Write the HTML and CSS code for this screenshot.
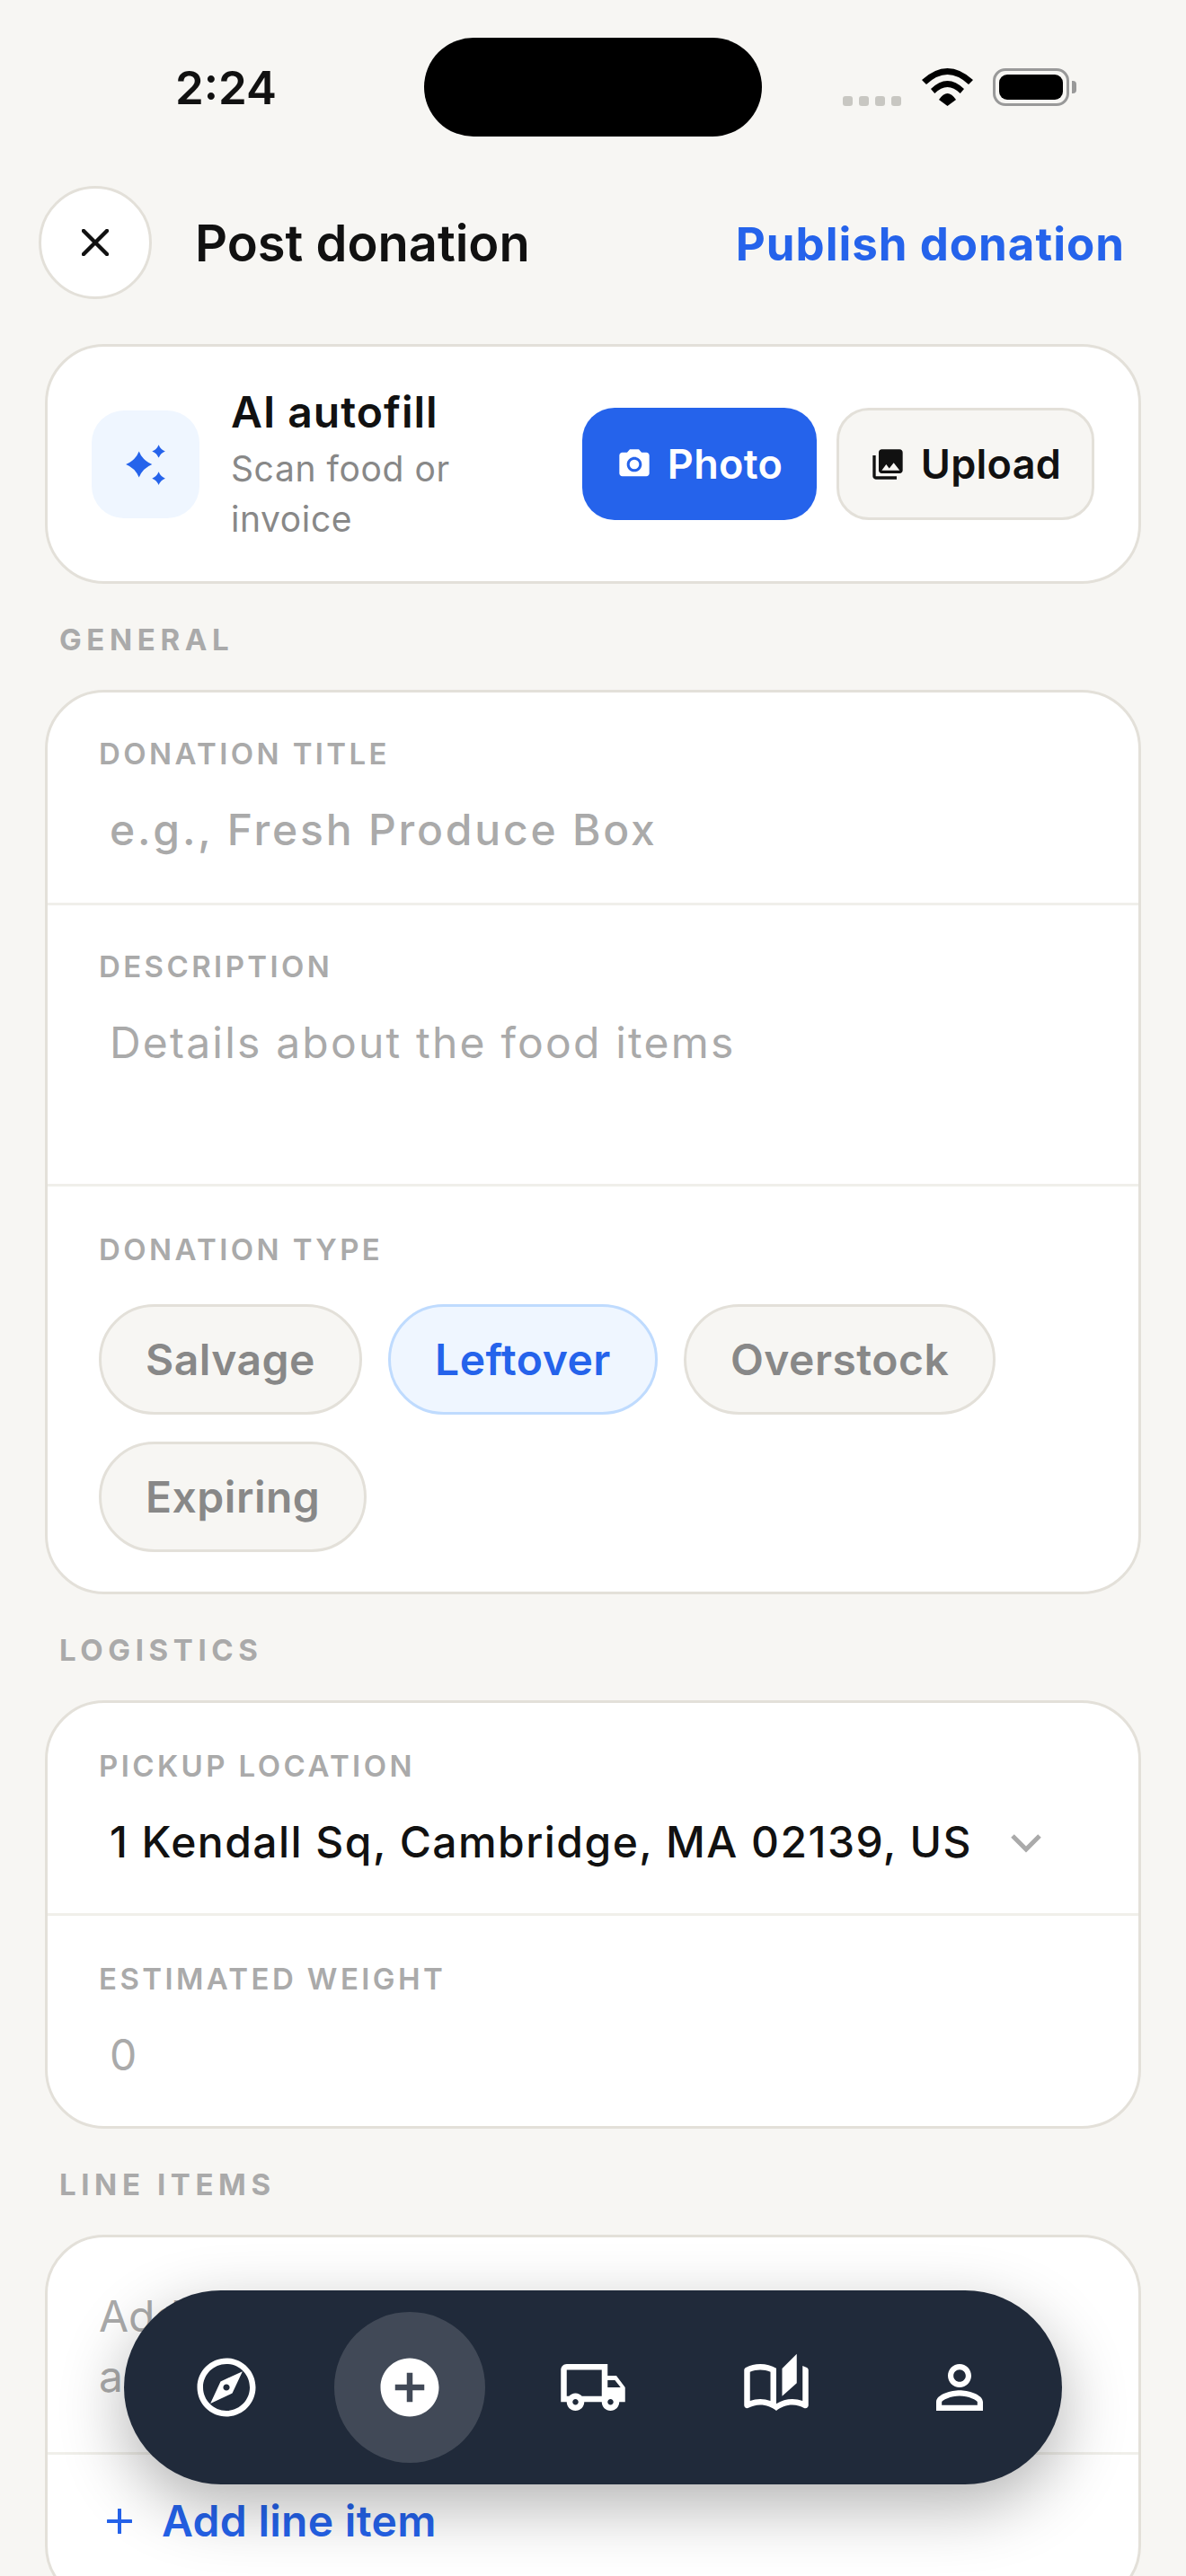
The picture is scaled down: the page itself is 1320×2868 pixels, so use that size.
FILE: index.html
```html
<!DOCTYPE html>
<html lang="en">
<head>
  <meta charset="UTF-8" />
  <title>Post donation</title>
  <link rel="stylesheet" href="styles.css">
</head>
<body>
  <div class="screen">

    <div class="status-bar">
      <span class="status-time">2:24</span>
      <div class="island"></div>
      <div class="status-icons">
        <div class="signal"><i></i><i></i><i></i><i></i></div>
        <svg class="wifi" viewBox="0 0 57 42" width="57" height="42">
          <path d="M0 13Q28.5-13 57 13L52 18Q28.5-4 5 18Z"/>
          <path d="M10 23Q28.5 5 47 23L42.7 28Q28.5 14 14.3 28Z"/>
          <path d="M19 35Q28.5 21 38 35L28.5 42Z"/>
        </svg>
        <div class="battery"><div class="battery-fill"></div></div>
        <div class="battery-nub"></div>
      </div>
    </div>

    <header class="top-bar">
      <button class="close-btn">
        <svg viewBox="0 0 30 30" width="30" height="30"><path d="M2 2L28 28M28 2L2 28" stroke="#111" stroke-width="4.5" stroke-linecap="round"/></svg>
      </button>
      <h1>Post donation</h1>
      <a class="publish">Publish donation</a>
    </header>

    <section class="card autofill">
      <div class="spark-tile">
        <svg viewBox="0 0 48 48" width="50" height="50" fill="#2563eb">
          <path d="M17 10Q21 20 31 24Q21 28 17 38Q13 28 3 24Q13 20 17 10Z"/>
          <path d="M38 3Q40 8 45 10Q40 12 38 17Q36 12 31 10Q36 8 38 3Z"/>
          <path d="M38 32Q40 37 45 39Q40 41 38 46Q36 41 31 39Q36 37 38 32Z"/>
        </svg>
      </div>
      <div class="autofill-text">
        <div class="autofill-title">AI autofill</div>
        <div class="autofill-sub">Scan food or invoice</div>
      </div>
      <button class="btn btn-blue">
        <svg viewBox="0 0 24 24" width="40" height="40" fill="#fff"><circle cx="12" cy="12" r="3.2"/><path d="M9 2L7.170 4H4c-1.100 0-2 .9-2 2v12c0 1.100.9 2 2 2h16c1.100 0 2-.9 2-2V6c0-1.100-.9-2-2-2h-3.170L15 2H9zm3 15c-2.760 0-5-2.240-5-5s2.240-5 5-5 5 2.240 5 5-2.240 5-5 5z"/></svg>
        Photo
      </button>
      <button class="btn btn-plain">
        <svg viewBox="0 0 24 24" width="40" height="40" fill="#111"><path d="M22 16V4c0-1.100-.9-2-2-2H8c-1.100 0-2 .9-2 2v12c0 1.100.9 2 2 2h12c1.100 0 2-.9 2-2zm-11-4l2.030 2.710L16 11l4 5H8l3-4zM2 6v14c0 1.100.9 2 2 2h14v-2H4V6H2z"/></svg>
        Upload
      </button>
    </section>

    <div class="section-label">GENERAL</div>
    <section class="card">
      <div class="row">
        <div class="field-label">DONATION TITLE</div>
        <div class="field-value placeholder bold">e.g., Fresh Produce Box</div>
      </div>
      <div class="row">
        <div class="field-label">DESCRIPTION</div>
        <div class="field-value placeholder multi">Details about the food items</div>
      </div>
      <div class="row chips-row">
        <div class="field-label">DONATION TYPE</div>
        <div class="chips">
          <span class="chip">Salvage</span>
          <span class="chip active">Leftover</span>
          <span class="chip">Overstock</span>
          <span class="chip">Expiring</span>
        </div>
      </div>
    </section>

    <div class="section-label">LOGISTICS</div>
    <section class="card logistics">
      <div class="row">
        <div class="field-label">PICKUP LOCATION</div>
        <div class="select-line">
          <div class="field-value">1 Kendall Sq, Cambridge, MA 02139, US</div>
          <svg viewBox="0 0 36 22" width="36" height="22"><path d="M3 3L18 18L33 3" fill="none" stroke="#aaa" stroke-width="5"/></svg>
        </div>
      </div>
      <div class="row">
        <div class="field-label">ESTIMATED WEIGHT</div>
        <div class="field-value placeholder">0</div>
      </div>
    </section>

    <div class="section-label">LINE ITEMS</div>
    <section class="card">
      <div class="row items-hint">Add each food item<br>and its quantity</div>
      <div class="add-line">
        <svg viewBox="0 0 28 28" width="28" height="28"><path d="M14 1V27M1 14H27" stroke="#2563eb" stroke-width="4" stroke-linecap="round"/></svg>
        <span>Add line item</span>
      </div>
    </section>

    <nav class="tab-bar">
      <a class="tab">
        <svg viewBox="0 0 24 24" width="78" height="78" fill="#fff"><path d="M12 2C6.480 2 2 6.480 2 12s4.480 10 10 10 10-4.480 10-10S17.520 2 12 2zm0 18c-4.410 0-8-3.590-8-8s3.590-8 8-8 8 3.590 8 8-3.590 8-8 8zm-5.500-2.500l7.510-3.490L17.500 6.500 9.990 9.990 6.500 17.500zm5.500-6.600c.61 0 1.100.49 1.100 1.100s-.49 1.100-1.100 1.100-1.100-.49-1.100-1.100.49-1.100 1.100-1.100z"/></svg>
      </a>
      <a class="tab current">
        <svg viewBox="0 0 24 24" width="78" height="78" fill="#fff"><path d="M12 2C6.480 2 2 6.480 2 12s4.480 10 10 10 10-4.480 10-10S17.520 2 12 2zm5 11h-4v4h-2v-4H7v-2h4V7h2v4h4v2z"/></svg>
      </a>
      <a class="tab">
        <svg viewBox="0 0 24 24" width="78" height="78" fill="#fff"><path d="M20 8h-3V4H3c-1.100 0-2 .9-2 2v11h2c0 1.660 1.340 3 3 3s3-1.340 3-3h6c0 1.660 1.340 3 3 3s3-1.340 3-3h2v-5l-3-4zm-.5 1.500l1.960 2.500H17V9.500h2.500zM6 18c-.55 0-1-.45-1-1s.45-1 1-1 1 .45 1 1-.45 1-1 1zm2.220-3c-.55-.61-1.330-1-2.220-1s-1.670.39-2.220 1H3V6h12v9H8.220zM18 18c-.55 0-1-.45-1-1s.45-1 1-1 1 .45 1 1-.45 1-1 1z"/></svg>
      </a>
      <a class="tab">
        <svg viewBox="0 0 24 24" width="78" height="78" fill="#fff"><path d="M22.470 5.200C22 4.960 21.510 4.760 21 4.590v12.030C19.860 16.210 18.690 16 17.500 16c-1.900 0-3.780.54-5.500 1.580V5.480C10.380 4.550 8.510 4 6.500 4c-1.790 0-3.480.44-4.970 1.200C1.200 5.360 1 5.710 1 6.080v12.080c0 .58.47.99 1 .99.16 0 .32-.04.48-.12C3.690 18.400 5.050 18 6.500 18c2.070 0 3.980.82 5.500 2 1.520-1.180 3.430-2 5.500-2 1.450 0 2.810.4 4.020 1.040.16.08.32.12.48.12.52 0 1-.41 1-.99V6.080c0-.37-.2-.72-.53-.88zM10 16.620C8.860 16.210 7.690 16 6.500 16c-1.190 0-2.360.21-3.500.62V6.710C4.110 6.240 5.280 6 6.500 6c1.200 0 2.390.25 3.500.72v9.900zM19 .5l-5 5V15l5-4.500V.5z"/></svg>
      </a>
      <a class="tab">
        <svg viewBox="0 0 24 24" width="78" height="78" fill="#fff"><path d="M12 5.900c1.160 0 2.100.94 2.100 2.100s-.94 2.100-2.100 2.100S9.900 9.160 9.900 8s.94-2.100 2.100-2.100m0 9c2.970 0 6.100 1.460 6.100 2.100v1.100H5.900V17c0-.64 3.130-2.100 6.100-2.100M12 4C9.790 4 8 5.790 8 8s1.790 4 4 4 4-1.790 4-4-1.790-4-4-4zm0 9c-2.670 0-8 1.340-8 4v3h16v-3c0-2.660-5.330-4-8-4z"/></svg>
      </a>
    </nav>

  </div>
</body>
</html>
```

FILE: styles.css
```css
* {
  box-sizing: border-box;
}

body {
  margin: 0;
  background: #f7f6f3;
  font-family: "Inter", "Liberation Sans", sans-serif;
  color: #111;
}

.screen {
  position: relative;
  width: 1320px;
  height: 2868px;
  overflow: hidden;
}

/* status bar */
.status-bar {
  height: 194px;
  display: flex;
  align-items: center;
  justify-content: space-between;
  padding: 0 122px 0 195px;
}

.status-time {
  font-size: 51px;
  font-weight: 600;
}

.island {
  position: absolute;
  left: 472px;
  top: 42px;
  width: 376px;
  height: 110px;
  border-radius: 55px;
  background: #000;
}

.status-icons {
  display: flex;
  align-items: flex-end;
  height: 42px;
}

.signal {
  display: flex;
  gap: 7px;
  margin-right: 23px;
}

.signal i {
  width: 11px;
  height: 11px;
  border-radius: 3px;
  background: #c8c7c2;
}

.wifi {
  margin-right: 22px;
}

.battery {
  width: 85px;
  height: 42px;
  padding: 4px;
  border: 3px solid #999;
  border-radius: 14px;
}

.battery-fill {
  height: 100%;
  background: #000;
  border-radius: 9px;
}

.battery-nub {
  width: 5px;
  height: 14px;
  margin: 0 0 14px 3px;
  background: #999;
  border-radius: 0 4px 4px 0;
}

/* header */
.top-bar {
  display: flex;
  align-items: center;
  margin-top: 13px;
  padding: 0 68px 0 43px;
}

.close-btn {
  width: 126px;
  height: 126px;
  border: 3px solid #e3e0d9;
  border-radius: 50%;
  background: #fff;
  display: flex;
  align-items: center;
  justify-content: center;
  padding: 0;
}

.top-bar h1 {
  margin: 2px 0 0 48px;
  font-size: 56px;
  font-weight: 600;
  flex: 1;
}

.publish {
  margin-top: 2px;
  font-size: 51px;
  font-weight: 700;
  letter-spacing: 1px;
  color: #2563eb;
}

/* cards */
.card {
  margin: 0 50px;
  background: #fff;
  border: 3px solid #e3e0d9;
  border-radius: 66px;
  overflow: hidden;
}

.autofill {
  margin-top: 50px;
  height: 267px;
  display: flex;
  align-items: center;
  padding: 0 49px;
}

.spark-tile {
  width: 120px;
  height: 120px;
  border-radius: 36px;
  background: #eff6ff;
  display: flex;
  align-items: center;
  justify-content: center;
  flex-shrink: 0;
}

.autofill-text {
  flex: 1;
  margin-left: 35px;
}

.autofill-title {
  font-size: 48px;
  font-weight: 600;
  letter-spacing: 1px;
  margin-top: 2px;
  margin-bottom: 6px;
}

.autofill-sub {
  width: 260px;
  font-size: 39px;
  line-height: 56px;
  letter-spacing: 0.6px;
  color: #888;
}

.btn {
  height: 125px;
  border-radius: 36px;
  display: flex;
  align-items: center;
  justify-content: center;
  gap: 17px;
  font-family: inherit;
  font-size: 45px;
  font-weight: 600;
  letter-spacing: 0.3px;
  padding: 0;
  flex-shrink: 0;
}

.btn-blue {
  width: 261px;
  background: #2563eb;
  border: 0;
  color: #fff;
  margin-right: 22px;
}

.btn-plain {
  width: 287px;
  background: #f7f6f3;
  border: 3px solid #e3e0d9;
  color: #111;
}

.section-label {
  margin: 42px 0 36px 66px;
  font-size: 33px;
  line-height: 40px;
  font-weight: 700;
  letter-spacing: 5.6px;
  color: #aaa;
}

.row {
  padding: 48px 57px 51px;
  border-bottom: 3px solid #f0efea;
}

.row:last-child {
  border-bottom: 0;
}

.logistics .row {
  padding: 50px 57px 49px;
}

.field-label {
  font-size: 33px;
  line-height: 40px;
  font-weight: 600;
  letter-spacing: 3.4px;
  color: #aaa;
}

.field-value {
  margin-top: 35px;
  padding-left: 12px;
  font-size: 48px;
  line-height: 60px;
  font-weight: 500;
  letter-spacing: 1.45px;
  color: #111;
}

.placeholder {
  font-weight: 400;
  letter-spacing: 2.2px;
  color: #aaa;
}

.placeholder.bold {
  font-weight: 500;
  letter-spacing: 2.8px;
}

.multi {
  min-height: 136px;
}

.select-line {
  display: flex;
  align-items: flex-end;
  justify-content: space-between;
  padding-right: 50px;
}

.select-line svg {
  margin-bottom: 18px;
}

.chips-row {
  padding-top: 50px;
  padding-bottom: 44px;
}

.chips {
  display: flex;
  flex-wrap: wrap;
  gap: 30px 29px;
  margin-top: 41px;
}

.chip {
  height: 123px;
  padding: 0 49px;
  display: flex;
  align-items: center;
  border: 3px solid #e3e0d9;
  border-radius: 62px;
  background: #f7f6f3;
  font-size: 48px;
  font-weight: 600;
  letter-spacing: 0.5px;
  color: #888;
}

.chip.active {
  background: #eff6ff;
  border-color: #bfdbfe;
  color: #2563eb;
}

.items-hint {
  padding: 54px 57px 51px;
  font-size: 48px;
  line-height: 67px;
  color: #aaa;
}

.add-line {
  display: flex;
  align-items: center;
  gap: 33px;
  padding: 44px 66px 60px;
  font-size: 48px;
  line-height: 60px;
  font-weight: 600;
  letter-spacing: 0.3px;
  color: #2563eb;
}

/* bottom nav, floats over the form */
.tab-bar {
  position: absolute;
  left: 138px;
  bottom: 102px;
  width: 1044px;
  height: 216px;
  padding: 24px 30px;
  display: flex;
  gap: 36px;
  border-radius: 108px;
  background: #202a3a;
  box-shadow: 0 24px 72px rgba(0, 0, 0, 0.3);
}

.tab {
  width: 168px;
  height: 168px;
  border-radius: 50%;
  display: flex;
  align-items: center;
  justify-content: center;
}

.tab.current {
  background: rgba(255, 255, 255, 0.15);
}
```
